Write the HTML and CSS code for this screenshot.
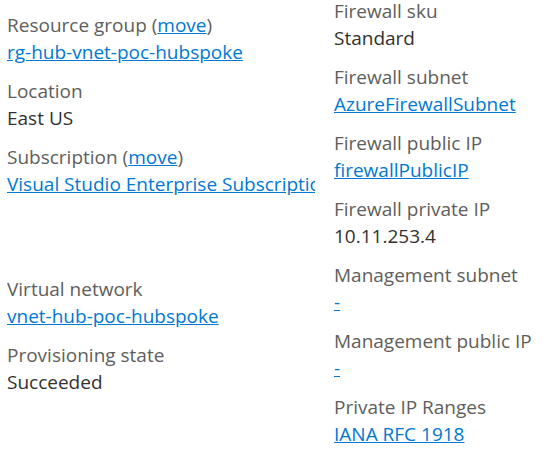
FILE: index.html
```html
<!DOCTYPE html>
<html lang="en">
<head>
<meta charset="utf-8">
<title>Essentials</title>
<link rel="stylesheet" href="styles.css">
</head>
<body>
<div class="essentials">
  <div class="col col-left">
    <div class="item">
      <div class="label">Resource group (<a href="#">move</a>)</div>
      <div class="value"><a href="#">rg-hub-vnet-poc-hubspoke</a></div>
    </div>
    <div class="item">
      <div class="label">Location</div>
      <div class="value">East US</div>
    </div>
    <div class="item">
      <div class="label">Subscription (<a href="#">move</a>)</div>
      <div class="value"><a href="#">Visual Studio Enterprise Subscription</a></div>
    </div>
    <div class="item item-empty"></div>
    <div class="item">
      <div class="label">Virtual network</div>
      <div class="value"><a href="#">vnet-hub-poc-hubspoke</a></div>
    </div>
    <div class="item">
      <div class="label">Provisioning state</div>
      <div class="value">Succeeded</div>
    </div>
  </div>
  <div class="col col-right">
    <div class="item">
      <div class="label">Firewall sku</div>
      <div class="value">Standard</div>
    </div>
    <div class="item">
      <div class="label">Firewall subnet</div>
      <div class="value"><a href="#">AzureFirewallSubnet</a></div>
    </div>
    <div class="item">
      <div class="label">Firewall public IP</div>
      <div class="value"><a href="#">firewallPublicIP</a></div>
    </div>
    <div class="item">
      <div class="label">Firewall private IP</div>
      <div class="value">10.11.253.4</div>
    </div>
    <div class="item">
      <div class="label">Management subnet</div>
      <div class="value"><a href="#" class="dash">-</a></div>
    </div>
    <div class="item">
      <div class="label">Management public IP</div>
      <div class="value"><a href="#" class="dash">-</a></div>
    </div>
    <div class="item">
      <div class="label">Private IP Ranges</div>
      <div class="value"><a href="#">IANA RFC 1918</a></div>
    </div>
  </div>
</div>
</body>
</html>
```

FILE: styles.css
```css
html, body {
  margin: 0;
  padding: 0;
  background: #ffffff;
}

body {
  font-family: "Segoe UI", "Open Sans", "Noto Sans", sans-serif;
  font-size: 19px;
  line-height: 27px;
  color: #323130;
}

.essentials {
  display: grid;
  grid-template-columns: 308px 1fr;
  column-gap: 19px;
  padding-left: 7px;
}

.col {
  display: flex;
  flex-direction: column;
  gap: 12px;
  min-width: 0;
}

.col-left {
  padding-top: 12px;
  overflow: hidden;
}

.col-right {
  margin-top: -2px;
}

.item {
  white-space: nowrap;
}

.item-empty {
  height: 54px;
}

.label {
  color: #605e5c;
}

.value {
  color: #323130;
}

a {
  color: #0078d4;
  text-decoration: underline;
}
```
